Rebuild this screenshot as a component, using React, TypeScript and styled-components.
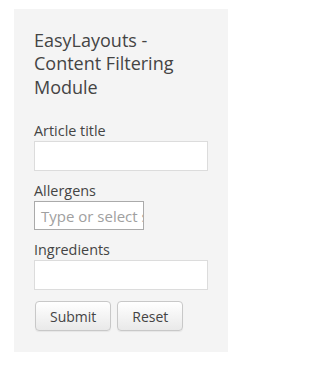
import React from "react";
import styled, { createGlobalStyle } from "styled-components";

const Global = createGlobalStyle`
  html, body { margin: 0; padding: 0; background: #fff; }
  body { font-family: "Open Sans", "DejaVu Sans", sans-serif; color: #444; }
  * { box-sizing: border-box; }
`;

const Panel = styled.div`
  margin: 9px 0 0 14px;
  width: 214px;
  background: #f4f4f4;
  padding: 20px 20px 21px 20px;
`;

const Title = styled.h3`
  margin: 0 0 21px 0;
  font-size: 18px;
  line-height: 23.4px;
  font-weight: 400;
  color: #444;
`;

const Form = styled.form`
  display: flex;
  flex-direction: column;
`;

const Field = styled.div`
  display: flex;
  flex-direction: column;
  align-items: flex-start;
  margin-bottom: 9px;
`;

const Label = styled.label`
  font-size: 14.4px;
  line-height: 21px;
  color: #444;
`;

const TextInput = styled.input`
  width: 174px;
  height: 30px;
  border: 1px solid #dcdcdc;
  background: #fff;
  padding: 4px 6px;
  font-family: inherit;
  font-size: 14px;
  color: #444;
  outline: none;
`;

const TagInput = styled.div`
  width: 110px;
  height: 29px;
  border: 1px solid #aaa;
  background: #fff;
  padding: 0 6px;
  display: flex;
  align-items: center;
  overflow: hidden;
  white-space: nowrap;
  font-size: 15px;
  color: #a0a0a0;
`;

const Buttons = styled.div`
  display: flex;
  gap: 6px;
  margin-top: 2px;
  padding-left: 1px;
`;

const Button = styled.button`
  height: 30px;
  padding: 0 14px;
  border: 1px solid #c8c8c8;
  border-radius: 4px;
  background: linear-gradient(#ffffff, #e9e9e9);
  box-shadow: 0 1px 1px rgba(0, 0, 0, 0.06);
  font-family: "Open Sans", "DejaVu Sans", sans-serif;
  font-size: 14px;
  color: #444;
  cursor: pointer;
`;

export default function App() {
  return (
    <>
      <Global />
      <Panel>
        <Title>
          EasyLayouts -<br />
          Content Filtering
          <br />
          Module
        </Title>
        <Form onSubmit={(e) => e.preventDefault()}>
          <Field>
            <Label>Article title</Label>
            <TextInput type="text" />
          </Field>
          <Field>
            <Label>Allergens</Label>
            <TagInput>Type or select some options</TagInput>
          </Field>
          <Field>
            <Label>Ingredients</Label>
            <TextInput type="text" />
          </Field>
          <Buttons>
            <Button type="submit">Submit</Button>
            <Button type="reset">Reset</Button>
          </Buttons>
        </Form>
      </Panel>
    </>
  );
}
